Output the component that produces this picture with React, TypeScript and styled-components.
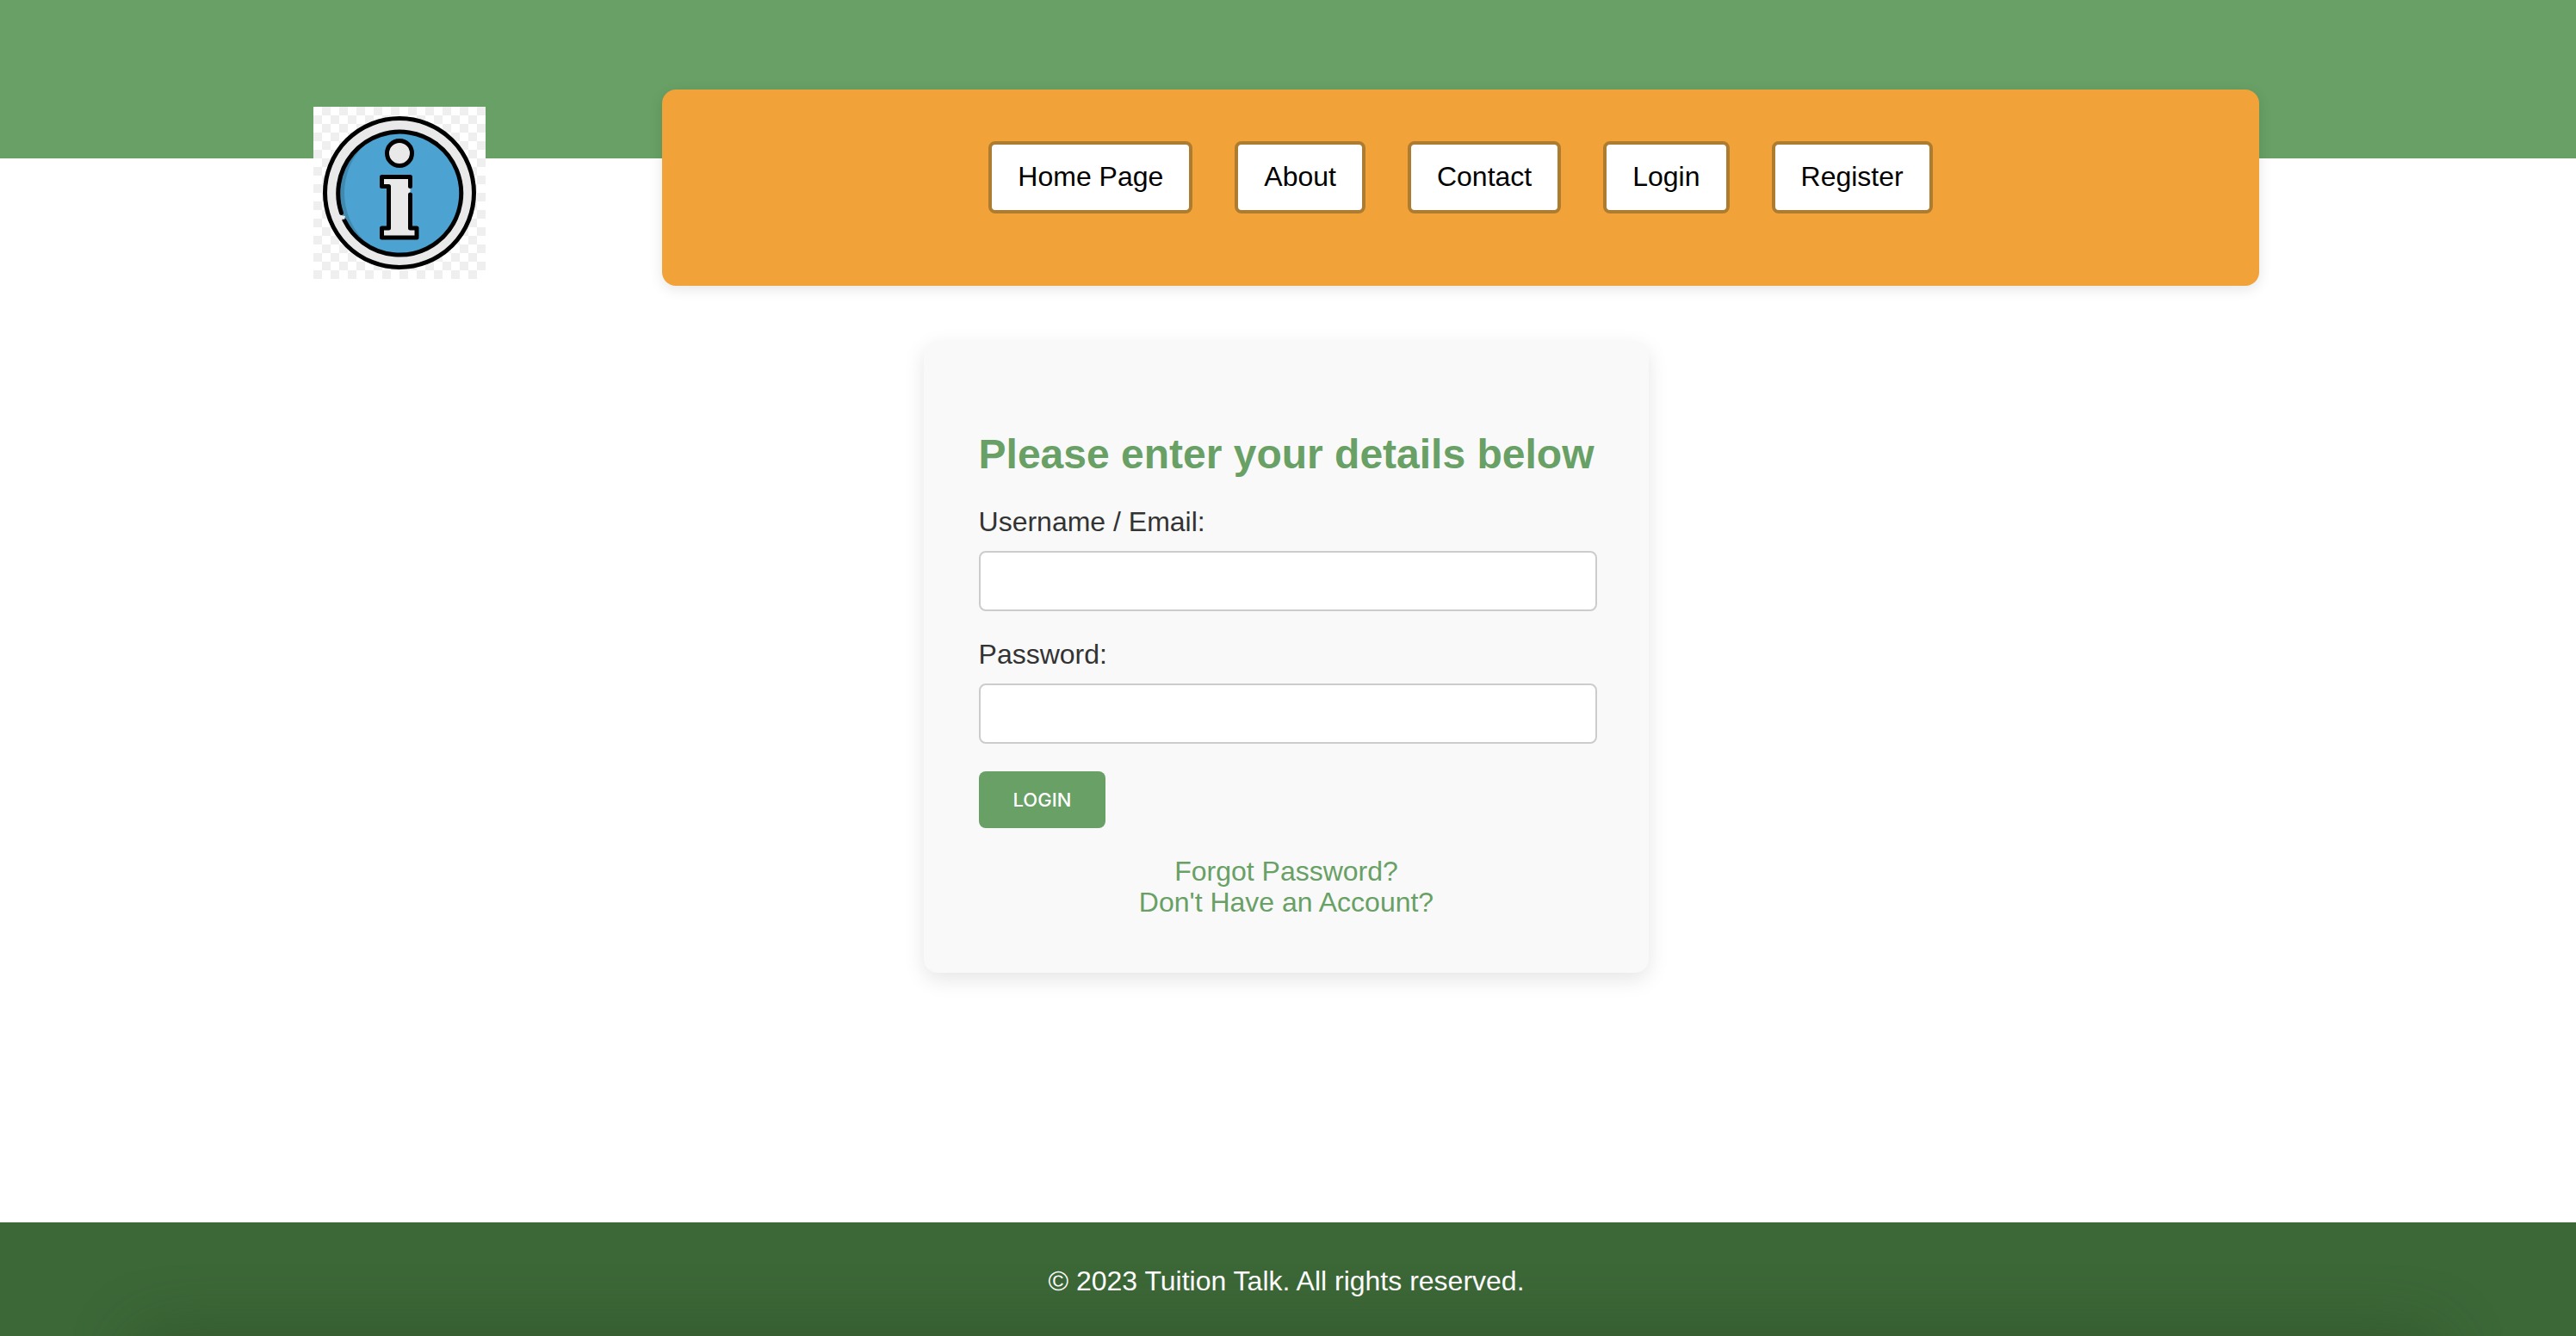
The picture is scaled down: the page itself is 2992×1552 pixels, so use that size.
import React from "react";
import styled, { createGlobalStyle } from "styled-components";

const GlobalStyle = createGlobalStyle`
  *, *::before, *::after { box-sizing: border-box; }
  body {
    margin: 0;
    background: #fff;
    color: #333;
    font-family: Arial, "Liberation Sans", sans-serif;
    font-size: 32px;
    line-height: 36px;
  }
`;

const Page = styled.div`
  display: flex;
  flex-direction: column;
  min-height: 100vh;
`;

const Header = styled.header`
  display: flex;
  align-items: flex-start;
  justify-content: space-between;
  gap: 205px;
  padding: 104px 368px 64px 364px;
  background: linear-gradient(#68a065 184px, transparent 184px);
`;

const LogoLink = styled.a`
  display: block;
  margin-top: 20px;
  svg { display: block; }
`;

const Nav = styled.nav`
  flex: 1;
  padding: 60px 40px 84px;
  border-radius: 16px;
  background: #f1a239;
  box-shadow: 0 4px 16px rgba(0, 0, 0, 0.1);
`;

const NavList = styled.ul`
  display: flex;
  justify-content: center;
  gap: 49px;
  margin: 0;
  padding: 0;
  list-style: none;
`;

const NavLink = styled.a`
  display: block;
  padding: 19px 30px 21px;
  border: 4px solid #ad7c30;
  border-radius: 8px;
  background: #fff;
  color: #000;
  text-decoration: none;
`;

const Main = styled.main`
  display: flex;
  flex: 1;
  align-items: flex-start;
  justify-content: center;
  padding-right: 4px;
`;

const Card = styled.form`
  padding: 64px;
  border-radius: 16px;
  background: #f9f9f9;
  box-shadow: 0 8px 24px rgba(0, 0, 0, 0.1);
`;

const Title = styled.h1`
  margin: 40px 0 32px;
  color: #68a065;
  font-size: 48px;
  line-height: 56px;
`;

const Field = styled.div`
  margin: 0 -4px 32px 0;
`;

const Label = styled.label`
  display: block;
  margin-bottom: 16px;
`;

const Input = styled.input`
  display: block;
  width: 100%;
  height: 70px;
  padding: 16px;
  border: 2px solid #ccc;
  border-radius: 8px;
  background: #fff;
  font: inherit;
`;

const Submit = styled.button`
  display: block;
  padding: 18px 40px;
  border: 0;
  border-radius: 8px;
  background: #68a065;
  color: #fff;
  font-family: Inter, sans-serif;
  font-size: 22px;
  font-weight: 500;
  line-height: 30px;
  text-transform: uppercase;
`;

const Links = styled.div`
  display: flex;
  flex-direction: column;
  align-items: center;
  margin-top: 32px;
`;

const TextLink = styled.a`
  color: #68a065;
  text-decoration: none;
`;

const Footer = styled.footer`
  position: relative;
  overflow: hidden;
  padding: 50px 4px 46px 0;
  background: #3c6737;
  color: #fff;
  text-align: center;

  &::after {
    content: "";
    position: absolute;
    top: 100%;
    left: 160px;
    right: 160px;
    height: 200px;
    border-radius: 40px;
    box-shadow: 0 0 70px rgba(40, 70, 30, 0.5);
  }
`;

const Copyright = styled.p`
  margin: 0;
`;

const Logo = () => (
  <svg width="200" height="200" viewBox="0 0 200 200" role="img" aria-label="Tuition Talk">
    <defs>
      <pattern id="checks" width="20" height="20" patternUnits="userSpaceOnUse">
        <rect width="20" height="20" fill="#fff" />
        <rect x="10" width="10" height="10" fill="#efefef" />
        <rect y="10" width="10" height="10" fill="#efefef" />
      </pattern>
      <clipPath id="disc">
        <circle cx="100" cy="100" r="72" />
      </clipPath>
    </defs>
    <rect width="200" height="200" fill="url(#checks)" />
    <circle cx="100" cy="100" r="86.500" fill="#e9e9e9" stroke="#000" strokeWidth="5" />
    <circle cx="100" cy="100" r="72" fill="#4189ae" />
    <ellipse cx="109" cy="100" rx="73" ry="76" fill="#4ca2d0" clipPath="url(#disc)" />
    <path
      d="M32.500 123.500 A71.500 71.500 0 1 1 36 132"
      fill="none"
      stroke="#000"
      strokeWidth="5"
      strokeLinecap="round"
    />
    <path d="M31 126 L37 127 L36 131 L32 130 Z" fill="#e9e9e9" />
    <circle cx="100" cy="54" r="14.500" fill="#e9e9e9" stroke="#000" strokeWidth="5" />
    <path
      d="M79.500 81.500 H112.500 V141 H120 V152 H79.500 V141 H87.500 V92.500 H79.500 Z"
      fill="#e9e9e9"
    />
    <path
      d="M112.500 92.500 V81.500 H79.500 V92.500 H87.500 V141 H79.500 V152 H120 V141 H112.500 V102"
      fill="none"
      stroke="#000"
      strokeWidth="5"
      strokeLinecap="round"
      strokeLinejoin="round"
    />
  </svg>
);

const pages = ["Home Page", "About", "Contact", "Login", "Register"];

export default function App() {
  return (
    <Page>
      <GlobalStyle />
      <Header>
        <LogoLink href="#home">
          <Logo />
        </LogoLink>
        <Nav>
          <NavList>
            {pages.map((page) => (
              <li key={page}>
                <NavLink href="#">{page}</NavLink>
              </li>
            ))}
          </NavList>
        </Nav>
      </Header>
      <Main>
        <Card>
          <Title>Please enter your details below</Title>
          <Field>
            <Label htmlFor="username">Username / Email:</Label>
            <Input id="username" type="text" />
          </Field>
          <Field>
            <Label htmlFor="password">Password:</Label>
            <Input id="password" type="password" />
          </Field>
          <Submit type="submit">Login</Submit>
          <Links>
            <TextLink href="#forgot">Forgot Password?</TextLink>
            <TextLink href="#register">Don't Have an Account?</TextLink>
          </Links>
        </Card>
      </Main>
      <Footer>
        <Copyright>© 2023 Tuition Talk. All rights reserved.</Copyright>
      </Footer>
    </Page>
  );
}
